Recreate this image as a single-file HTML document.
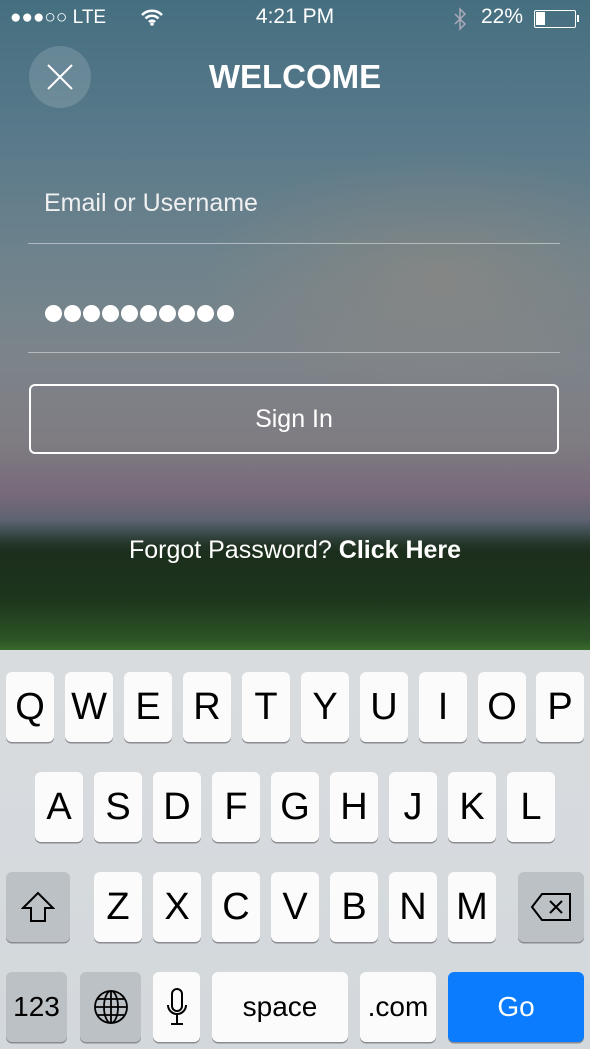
<!DOCTYPE html>
<html><head><meta charset="utf-8"><style>
*{margin:0;padding:0;box-sizing:border-box}
body{width:590px;height:1049px;overflow:hidden;position:relative;font-family:"Liberation Sans",sans-serif;color:#fff}
.bg{position:absolute;left:0;top:0;width:590px;height:650px;background:linear-gradient(180deg,#456f80 0%,#58798a 20%,#6e838c 40%,#7c848a 55%,#7f7c82 68%,#77697a 76%,#52606e 82%,#243426 86%,#1a2a1a 92%,#213d1e 97%,#2f5a25 100%)}
.warm{position:absolute;left:200px;top:150px;width:400px;height:250px;background:radial-gradient(ellipse at 60% 50%,rgba(170,140,120,.35),rgba(0,0,0,0) 70%)}
.trees{position:absolute;left:0;top:520px;width:590px;height:130px;background:linear-gradient(180deg,rgba(20,35,20,0) 0%,#1c2e1c 25%,#1d351c 60%,#2c5426 92%,#3a6a2c 100%)}
.abs{position:absolute}
.key{position:absolute;background:#fbfbfb;border-radius:6px;box-shadow:0 1.5px 0 #8a8c90;color:#000;font-size:38px;text-align:center;line-height:70px;height:70px}
.dk{background:#bcc1c6}
.dot{position:absolute;top:305px;width:17px;height:17px;border-radius:50%;background:#fff}
</style></head><body>
<div class="bg"></div><div class="warm"></div><div class="trees"></div>
<div class="abs" style="left:10px;top:7px;font-size:19px">●●●○○ LTE</div>
<svg class="abs" style="left:141px;top:9px" width="22" height="17" viewBox="0 0 22 17"><path d="M1 6 A14 14 0 0 1 21 6 M4.5 9.5 A9 9 0 0 1 17.5 9.5 M8 13 A4 4 0 0 1 14 13" stroke="#fff" stroke-width="2.5" fill="none"/><circle cx="11" cy="15" r="1.8" fill="#fff"/></svg>
<div class="abs" style="left:0;width:590px;top:5px;text-align:center;font-size:21px">4:21 PM</div>
<svg class="abs" style="left:453px;top:7px" width="14" height="24" viewBox="0 0 14 24"><path d="M2 7L12 17L7 22V2L12 7L2 17" fill="none" stroke="#aab" stroke-width="1.5"/></svg>
<div class="abs" style="left:481px;top:5px;font-size:21px">22%</div>
<div class="abs" style="left:534px;top:10px;width:42px;height:18px;border:1.5px solid #fff;border-radius:2px"><div style="width:9px;height:13px;margin:1px;background:#fff"></div></div>
<div class="abs" style="left:577px;top:15px;width:2px;height:7px;background:#fff"></div>
<div class="abs" style="left:29px;top:46px;width:62px;height:62px;border-radius:50%;background:rgba(255,255,255,.15)"></div>
<svg class="abs" style="left:46px;top:63px" width="28" height="28"><path d="M2 2L26 26M26 2L2 26" stroke="#fff" stroke-width="2"/></svg>
<div class="abs" style="left:0;width:590px;top:58px;text-align:center;font-size:33px;font-weight:bold">WELCOME</div>
<div class="abs" style="left:44px;top:189px;font-size:25px;color:#f0f0f0">Email or Username</div>
<div class="abs" style="left:28px;top:243px;width:532px;height:1px;background:rgba(255,255,255,.45)"></div>
<div class="dot" style="left:45px"></div><div class="dot" style="left:64px"></div><div class="dot" style="left:83px"></div><div class="dot" style="left:102px"></div><div class="dot" style="left:121px"></div><div class="dot" style="left:140px"></div><div class="dot" style="left:159px"></div><div class="dot" style="left:178px"></div><div class="dot" style="left:197px"></div><div class="dot" style="left:217px"></div>
<div class="abs" style="left:28px;top:352px;width:532px;height:1px;background:rgba(255,255,255,.45)"></div>
<div class="abs" style="left:29px;top:384px;width:530px;height:70px;border:2px solid #fff;border-radius:6px;text-align:center;line-height:66px;font-size:25px">Sign In</div>
<div class="abs" style="left:0;width:590px;top:536px;text-align:center;font-size:25px">Forgot Password? <b>Click Here</b></div>
<div class="abs" style="left:0;top:650px;width:590px;height:399px;background:linear-gradient(180deg,#d9dcdf,#d3d8dc)"></div>
<div class="key" style="left:6px;top:672px;width:48px">Q</div>
<div class="key" style="left:65px;top:672px;width:48px">W</div>
<div class="key" style="left:124px;top:672px;width:48px">E</div>
<div class="key" style="left:183px;top:672px;width:48px">R</div>
<div class="key" style="left:242px;top:672px;width:48px">T</div>
<div class="key" style="left:301px;top:672px;width:48px">Y</div>
<div class="key" style="left:360px;top:672px;width:48px">U</div>
<div class="key" style="left:419px;top:672px;width:48px">I</div>
<div class="key" style="left:478px;top:672px;width:48px">O</div>
<div class="key" style="left:536px;top:672px;width:48px">P</div>
<div class="key" style="left:35px;top:772px;width:48px">A</div>
<div class="key" style="left:94px;top:772px;width:48px">S</div>
<div class="key" style="left:153px;top:772px;width:48px">D</div>
<div class="key" style="left:212px;top:772px;width:48px">F</div>
<div class="key" style="left:271px;top:772px;width:48px">G</div>
<div class="key" style="left:330px;top:772px;width:48px">H</div>
<div class="key" style="left:389px;top:772px;width:48px">J</div>
<div class="key" style="left:448px;top:772px;width:48px">K</div>
<div class="key" style="left:507px;top:772px;width:48px">L</div>
<div class="key dk" style="left:6px;top:872px;width:64px"><svg width="34" height="32" style="margin-top:19px" viewBox="0 0 34 32"><path d="M17 2L2 17H10V30H24V17H32Z" fill="none" stroke="#000" stroke-width="2"/></svg></div>
<div class="key" style="left:94px;top:872px;width:48px">Z</div>
<div class="key" style="left:153px;top:872px;width:48px">X</div>
<div class="key" style="left:212px;top:872px;width:48px">C</div>
<div class="key" style="left:271px;top:872px;width:48px">V</div>
<div class="key" style="left:330px;top:872px;width:48px">B</div>
<div class="key" style="left:389px;top:872px;width:48px">N</div>
<div class="key" style="left:448px;top:872px;width:48px">M</div>
<div class="key dk" style="left:518px;top:872px;width:66px"><svg width="42" height="30" style="margin-top:20px" viewBox="0 0 42 30"><path d="M12 2H40V28H12L2 15Z" fill="none" stroke="#000" stroke-width="2"/><path d="M20 9L32 21M32 9L20 21" stroke="#000" stroke-width="2"/></svg></div>
<div class="key dk" style="left:6px;top:972px;width:61px;font-size:28px">123</div>
<div class="key dk" style="left:80px;top:972px;width:61px"><svg width="36" height="36" style="margin-top:17px" viewBox="0 0 36 36" fill="none" stroke="#000" stroke-width="1.8"><circle cx="18" cy="18" r="16"/><ellipse cx="18" cy="18" rx="7" ry="16"/><path d="M18 2V34M2 18H34M5 10H31M5 26H31"/></svg></div>
<div class="key" style="left:153px;top:972px;width:47px"><svg width="24" height="40" style="margin-top:15px" viewBox="0 0 24 40" fill="none" stroke="#000" stroke-width="2"><rect x="7" y="2" width="10" height="22" rx="5"/><path d="M3 18A9 9 0 0 0 21 18M12 28V37M6 37H18"/></svg></div>
<div class="key" style="left:212px;top:972px;width:136px;font-size:28px">space</div>
<div class="key" style="left:360px;top:972px;width:76px;font-size:28px">.com</div>
<div class="key" style="left:448px;top:972px;width:136px;background:#0a7cfd;color:#fff;font-size:28px">Go</div>
</body></html>
